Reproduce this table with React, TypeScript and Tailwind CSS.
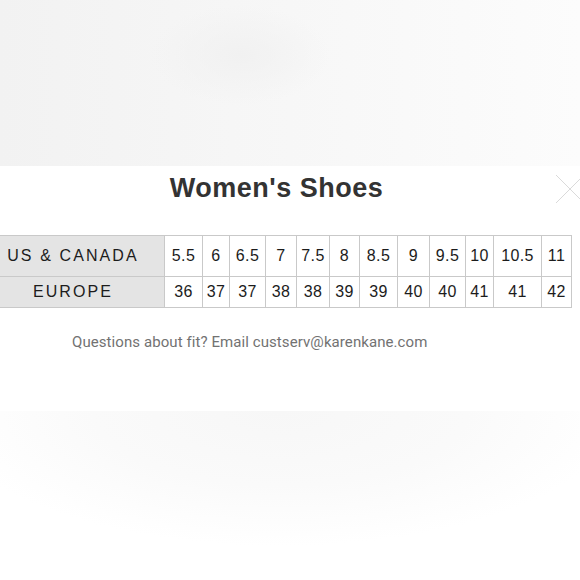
import React from "react";

const us = ["5.5", "6", "6.5", "7", "7.5", "8", "8.5", "9", "9.5", "10", "10.5", "11"];
const eu = ["36", "37", "37", "38", "38", "39", "39", "40", "40", "41", "41", "42"];

export default function App() {
  return (
    <div className="relative w-[580px] h-[580px] overflow-hidden bg-white">
      <div className="h-[166px] bg-[radial-gradient(ellipse_90px_50px_at_240px_55px,#f1f1f1,transparent),linear-gradient(to_right,#f2f2f2,#f6f6f6_40%,#fafafa_80%,#fcfcfc)]" />
      <div className="relative bg-white pt-[6px]">
        <div className="flex justify-center pr-[27px]">
          <h1
            className="h-[32px] leading-[32px] text-[27px] font-bold tracking-[0.5px] text-[#333333]"
            style={{ fontFamily: '"Liberation Sans", Arial, sans-serif' }}
          >
            Women's Shoes
          </h1>
        </div>
        <svg className="absolute left-[555px] top-[8px]" width="30" height="30" viewBox="0 0 30 30">
          <path d="M1 1 L29 29 M29 1 L1 29" stroke="#dadada" strokeWidth="1" fill="none" />
        </svg>
        <div
          className="mt-[31px] w-[572px] grid grid-cols-[165px_38px_27px_36px_31px_33px_30px_38px_32px_36px_28px_48px_30px] border-t border-[#c9c9c9] text-[16px] text-[#1c1c1c]"
          style={{ fontFamily: '"Liberation Sans", Arial, sans-serif' }}
        >
          <div className="h-[41px] flex items-center justify-center pr-[18px] bg-[#e4e4e4] border-r border-b border-[#c9c9c9] tracking-[2.1px]">
            US &amp; CANADA
          </div>
          {us.map((v, i) => (
            <div key={"u" + i} className="h-[41px] flex items-center justify-center border-r border-b border-[#c9c9c9] tracking-[0.4px]">
              {v}
            </div>
          ))}
          <div className="h-[31px] flex items-center justify-center pr-[18px] bg-[#e4e4e4] border-r border-b border-[#c9c9c9] tracking-[2.1px]">
            EUROPE
          </div>
          {eu.map((v, i) => (
            <div key={"e" + i} className="h-[31px] flex items-center justify-center border-r border-b border-[#c9c9c9] tracking-[0.4px]">
              {v}
            </div>
          ))}
        </div>
        <p
          className="mt-[22px] pl-[72px] leading-6 text-[15px] tracking-[0.08px] text-[#727272]"
          style={{ fontFamily: "Roboto, sans-serif" }}
        >
          Questions about fit? Email custserv@karenkane.com
        </p>
        <div className="mt-[57px] h-[135px] bg-[radial-gradient(ellipse_340px_135px_at_280px_0px,#f7f7f7,#fafafa_55%,#ffffff)]" />
      </div>
    </div>
  );
}
